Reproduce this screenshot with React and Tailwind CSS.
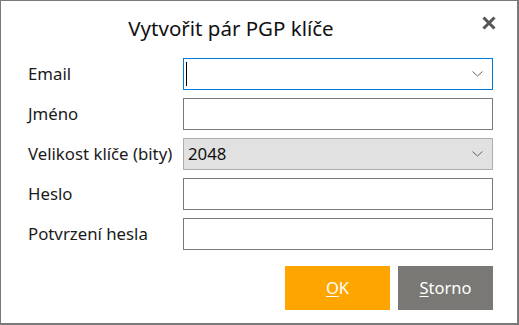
import React from 'react';

const font = { fontFamily: '"Segoe UI", "Noto Sans", "Open Sans", sans-serif' };

const Chevron = () => (
  <svg width="11" height="6" viewBox="0 0 11 6" className="absolute right-[9px] top-1/2 -translate-y-1/2">
    <path d="M0.5 0.5 L5.5 5 L10.5 0.5" fill="none" stroke="#666" strokeWidth="1" />
  </svg>
);

const Row = ({ label, children }) => (
  <div className="flex items-center h-8">
    <label className="w-[155px] shrink-0 text-[16.8px] text-[#1a1a1a]">{label}</label>
    {children}
  </div>
);

const TextBox = () => (
  <input type="text" className="w-[310px] h-8 border border-[#7a7a7a] bg-white outline-none px-1" />
);

export default function App() {
  return (
    <div
      className="w-[519px] h-[325px] bg-white border border-[#7a7a7a] border-r-2 border-b-2 flex flex-col"
      style={font}
    >
      <div className="relative h-[57px] flex items-center pr-[56px]">
        <h1 className="flex-1 text-center text-[20.5px] text-[#111] -mt-[3px]">Vytvořit pár PGP klíče</h1>
        <button className="absolute right-[20px] top-[14px] w-[16px] h-[16px]">
          <svg viewBox="0 0 16 16" width="16" height="16">
            <path d="M2.5 2.5 L13.5 13.5 M13.5 2.5 L2.5 13.5" stroke="#555" strokeWidth="3" />
          </svg>
        </button>
      </div>

      <div className="flex flex-col gap-2 pl-[27px]">
        <Row label="Email">
          <div className="relative w-[310px] h-8 border border-[#0078d7] bg-white">
            <div className="absolute left-[2px] top-[3px] w-px h-[24px] bg-black" />
            <Chevron />
          </div>
        </Row>
        <Row label="Jméno">
          <TextBox />
        </Row>
        <Row label="Velikost klíče (bity)">
          <div className="relative w-[310px] h-8 border border-[#adadad] bg-[#e1e1e1] flex items-center pl-1 text-[16.8px] text-[#111]">
            2048
            <Chevron />
          </div>
        </Row>
        <Row label="Heslo">
          <TextBox />
        </Row>
        <Row label="Potvrzení hesla">
          <TextBox />
        </Row>
      </div>

      <div className="flex justify-end gap-2 pr-[24px] mt-[16px]">
        <button className="w-[105px] h-[44px] bg-[#ffa500] text-white text-[16.5px]">
          <span className="underline underline-offset-2">O</span>K
        </button>
        <button className="w-[95px] h-[44px] bg-[#7a7874] text-white text-[16.5px]">
          <span className="underline underline-offset-2">S</span>torno
        </button>
      </div>
    </div>
  );
}
